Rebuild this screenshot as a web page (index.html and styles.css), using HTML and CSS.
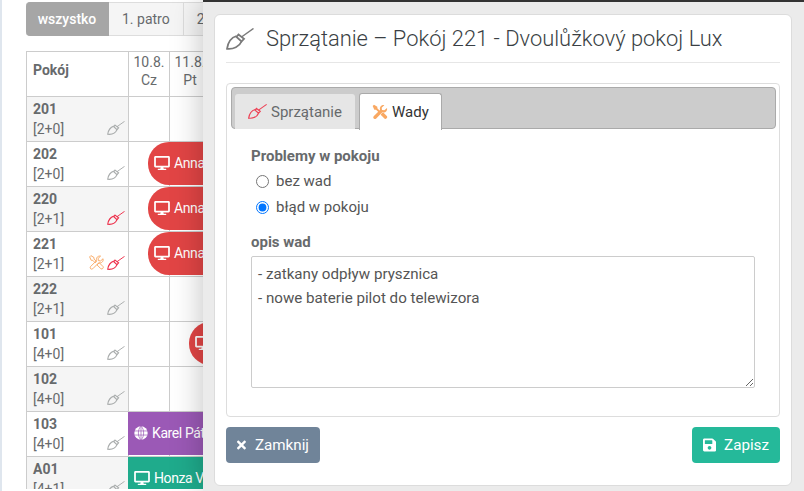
FILE: index.html
```html
<!DOCTYPE html>
<html lang="pl">
<head>
<meta charset="utf-8">
<title>Sprzątanie</title>
<link rel="stylesheet" href="styles.css">
</head>
<body>
<svg class="defs" width="0" height="0">
  <symbol id="broom" viewBox="0 0 28 22">
    <path d="M27.5 .5 15.5 9" fill="none" stroke="currentColor" stroke-width="1.5"/>
    <path d="M12.5 6.5 18 10.8 15.5 13.5 10.5 9Z" fill="none" stroke="currentColor" stroke-width="1.8"/>
    <path d="M10.5 8C5.5 9.5 2 14 1 20.8 7.5 21.5 13.5 18.5 15.5 13.5" fill="none" stroke="currentColor" stroke-width="1.8"/>
  </symbol>
  <symbol id="tools" viewBox="0 0 24 24">
    <path d="M22.5 6 18.5 9.5 15 9 14.5 5.5 18.5 1.8C14 1 11 4.5 12 9L2.5 18.5C.5 21 3.5 24 6 22L15.5 12.5C20 13.5 23.5 10.5 22.5 6Z" fill="none" stroke="currentColor" stroke-width="1.5"/>
    <path d="M1 3 3 1 8 4V6.5L12 10.5 10 12.5 6 8.5H3.5ZM14 14.5 16.5 12.5 22.5 18.5C24 20.5 21 23.5 19 22L13 16Z" fill="none" stroke="currentColor" stroke-width="1.5"/>
  </symbol>
  <symbol id="tools-solid" viewBox="0 0 24 24">
    <path d="M22.5 6 18.5 9.5 15 9 14.5 5.5 18.5 1.8C14 1 11 4.5 12 9L2.5 18.5C.5 21 3.5 24 6 22L15.5 12.5C20 13.5 23.5 10.5 22.5 6Z" fill="currentColor"/>
    <path d="M1 3 3 1 8 4V6.5L12 10.5 10 12.5 6 8.5H3.5ZM14 14.5 16.5 12.5 22.5 18.5C24 20.5 21 23.5 19 22L13 16Z" fill="currentColor"/>
  </symbol>
  <symbol id="desktop" viewBox="0 0 576 512">
    <path fill="currentColor" d="M528 0H48C21.5 0 0 21.5 0 48v320c0 26.5 21.5 48 48 48h192l-16 48h-72c-13.3 0-24 10.7-24 24s10.7 24 24 24h272c13.3 0 24-10.7 24-24s-10.7-24-24-24h-72l-16-48h192c26.5 0 48-21.5 48-48V48c0-26.5-21.5-48-48-48zm-16 352H64V64h448v288z"/>
  </symbol>
  <symbol id="globe" viewBox="0 0 24 24">
    <circle cx="12" cy="12" r="11.5" fill="currentColor"/>
    <path d="M1 8.5H23M1 15.5H23M12 0V24M12 .5C6 5 6 19 12 23.5M12 .5C18 5 18 19 12 23.5" fill="none" stroke="#9b59b6" stroke-width="1.2"/>
  </symbol>
  <symbol id="times" viewBox="0 0 352 512">
    <path fill="currentColor" d="M242.72 256l100.07-100.07c12.28-12.28 12.28-32.19 0-44.48l-22.24-22.24c-12.28-12.28-32.19-12.28-44.48 0L176 189.28 75.93 89.21c-12.28-12.28-32.19-12.28-44.48 0L9.21 111.45c-12.28 12.28-12.28 32.19 0 44.48L109.28 256 9.21 356.07c-12.28 12.28-12.28 32.19 0 44.48l22.24 22.24c12.28 12.28 32.2 12.28 44.48 0L176 322.72l100.07 100.07c12.28 12.28 32.2 12.28 44.48 0l22.24-22.24c12.28-12.28 12.28-32.19 0-44.48L242.72 256z"/>
  </symbol>
  <symbol id="save" viewBox="0 0 448 512">
    <path fill="currentColor" d="M433.941 129.941l-83.882-83.882A48 48 0 0 0 316.118 32H48C21.49 32 0 53.49 0 80v352c0 26.51 21.49 48 48 48h352c26.51 0 48-21.49 48-48V163.882a48 48 0 0 0-14.059-33.941zM224 416c-35.346 0-64-28.654-64-64 0-35.346 28.654-64 64-64s64 28.654 64 64c0 35.346-28.654 64-64 64zm96-304.52V212c0 6.627-5.373 12-12 12H76c-6.627 0-12-5.373-12-12V108c0-6.627 5.373-12 12-12h228.52c3.183 0 6.235 1.264 8.485 3.515l3.48 3.48A11.996 11.996 0 0 1 320 111.48z"/>
  </symbol>
</svg>

<main class="page">
  <nav class="floors">
    <a class="floor floor-active">wszystko</a>
    <a class="floor">1. patro</a>
    <a class="floor">2. patro</a>
  </nav>

  <div class="grid">
    <div class="cell head room">Pokój</div>
    <div class="cell head">10.8.<br>Cz</div>
    <div class="cell head">11.8.<br>Pt</div>

    <div class="cell room alt"><div class="room-info"><b>201</b><span>[2+0]</span></div><div class="room-icons"><svg class="i-broom"><use href="#broom"/></svg></div></div>
    <div class="cell"></div><div class="cell"></div>

    <div class="cell room"><div class="room-info"><b>202</b><span>[2+0]</span></div><div class="room-icons"><svg class="i-broom"><use href="#broom"/></svg></div></div>
    <div class="cell"><div class="bar bar-red bar-half"><svg class="i-desk"><use href="#desktop"/></svg>Anna</div></div><div class="cell"></div>

    <div class="cell room alt"><div class="room-info"><b>220</b><span>[2+1]</span></div><div class="room-icons"><svg class="i-broom dirty"><use href="#broom"/></svg></div></div>
    <div class="cell"><div class="bar bar-red bar-half"><svg class="i-desk"><use href="#desktop"/></svg>Anna</div></div><div class="cell"></div>

    <div class="cell room"><div class="room-info"><b>221</b><span>[2+1]</span></div><div class="room-icons"><svg class="i-tools"><use href="#tools"/></svg><svg class="i-broom dirty"><use href="#broom"/></svg></div></div>
    <div class="cell"><div class="bar bar-red bar-half"><svg class="i-desk"><use href="#desktop"/></svg>Anna</div></div><div class="cell"></div>

    <div class="cell room alt"><div class="room-info"><b>222</b><span>[2+1]</span></div><div class="room-icons"><svg class="i-broom"><use href="#broom"/></svg></div></div>
    <div class="cell"></div><div class="cell"></div>

    <div class="cell room"><div class="room-info"><b>101</b><span>[4+0]</span></div><div class="room-icons"><svg class="i-broom"><use href="#broom"/></svg></div></div>
    <div class="cell"></div><div class="cell"><div class="bar bar-red bar-half"><svg class="i-desk"><use href="#desktop"/></svg></div></div>

    <div class="cell room alt"><div class="room-info"><b>102</b><span>[4+0]</span></div><div class="room-icons"><svg class="i-broom"><use href="#broom"/></svg></div></div>
    <div class="cell"></div><div class="cell"></div>

    <div class="cell room"><div class="room-info"><b>103</b><span>[4+0]</span></div><div class="room-icons"><svg class="i-broom"><use href="#broom"/></svg></div></div>
    <div class="cell"><div class="bar bar-purple"><svg class="i-globe"><use href="#globe"/></svg>Karel Pátý</div></div><div class="cell"></div>

    <div class="cell room alt"><div class="room-info"><b>A01</b><span>[4+1]</span></div><div class="room-icons"><svg class="i-broom"><use href="#broom"/></svg></div></div>
    <div class="cell"><div class="bar bar-green"><svg class="i-desk"><use href="#desktop"/></svg>Honza Vyskočil</div></div><div class="cell"></div>
  </div>
</main>

<aside class="panel">
  <section class="modal">
    <header class="modal-head">
      <svg class="title-icon"><use href="#broom"/></svg>
      <h1>Sprzątanie – Pokój 221 - Dvoulůžkový pokoj Lux</h1>
    </header>

    <div class="tabs-box">
      <div class="tabs">
        <a class="tab"><svg class="tab-broom"><use href="#broom"/></svg>Sprzątanie</a>
        <a class="tab tab-active"><svg class="tab-tools"><use href="#tools-solid"/></svg>Wady</a>
      </div>
      <form class="form">
        <div class="label">Problemy w pokoju</div>
        <label class="radio"><input type="radio" name="w">bez wad</label>
        <label class="radio"><input type="radio" name="w" checked>błąd w pokoju</label>
        <div class="label label-opis">opis wad</div>
        <textarea class="area">- zatkany odpływ prysznica
- nowe baterie pilot do telewizora</textarea>
      </form>
    </div>

    <footer class="actions">
      <button type="button" class="btn btn-close"><svg class="i-times"><use href="#times"/></svg>Zamknij</button>
      <button type="button" class="btn btn-save"><svg class="i-save"><use href="#save"/></svg>Zapisz</button>
    </footer>
  </section>
</aside>
</body>
</html>
```
FILE: styles.css
```css
* { box-sizing: border-box; }
html, body { margin: 0; height: 100%; }
body {
  background: #fff;
  border-left: 2px solid #dfe6ee;
  font-family: Roboto, "Liberation Sans", sans-serif;
  font-size: 14px;
  color: #676a6c;
  overflow: hidden;
  width: 804px;
  height: 491px;
  position: relative;
}
.defs { position: absolute; }

.page { padding: 2px 0 0 24px; width: 300px; height: 489px; overflow: hidden; }
.floors { display: flex; height: 34px; width: 280px; }
.floor {
  display: block;
  padding: 0 13px;
  line-height: 32px;
  background: #f5f5f5;
  border: 1px solid #ddd;
  border-left: 0;
  white-space: nowrap;
  font-size: 14px;
  color: #676a6c;
}
.floor-active {
  background: #a6a6a6;
  border-color: #a6a6a6;
  color: #fff;
  font-weight: 500;
  border-radius: 4px 0 0 4px;
  width: 83px;
  text-align: center;
  padding: 0;
}

.grid {
  margin-top: 15px;
  display: grid;
  grid-template-columns: 102px 41px 41px;
  grid-auto-rows: 45px;
  width: 280px;
  border-top: 1px solid #ccc;
  border-left: 1px solid #ccc;
}
.cell {
  position: relative;
  border-right: 1px solid #ccc;
  border-bottom: 1px solid #ccc;
}
.head {
  text-align: center;
  line-height: 18px;
  padding-top: 1px;
  font-size: 14px;
}
.head.room {
  text-align: left;
  font-weight: 700;
  padding: 9px 0 0 6px;
  font-size: 14px;
}
.room { display: flex; justify-content: space-between; padding: 4px 3px 0 6px; }
.alt { background: #f5f5f5; }
.room-info { display: flex; flex-direction: column; }
.room-info b { font-weight: 700; line-height: 16px; }
.room-info span { line-height: 16px; margin-top: 4px; }
.room-icons { display: flex; align-items: flex-end; gap: 3px; padding-bottom: 6px; }
.i-broom { width: 18px; height: 14px; color: #a9acac; }
.i-broom.dirty { color: #ed2f4a; }
.i-tools { width: 15px; height: 15px; color: #f9a862; }

.bar {
  position: absolute;
  top: 0;
  left: -1px;
  width: 200px;
  height: 43px;
  display: flex;
  align-items: center;
  padding-bottom: 1px;
  color: #fff;
  font-size: 14px;
  letter-spacing: -.4px;
  white-space: nowrap;
  z-index: 1;
}
.bar-half { left: 19px; border-radius: 21px 0 0 21px; padding-left: 6px; }
.bar-red { background: #e24545; }
.bar-purple { background: #9b59b6; padding-left: 6px; }
.bar-green { background: #1fab8c; padding-left: 6px; }
.i-desk { width: 16px; height: 14px; margin-right: 4px; flex: none; }
.i-globe { width: 14px; height: 14px; margin-right: 4px; flex: none; }

.panel {
  position: absolute;
  z-index: 2;
  top: 0;
  left: 201px;
  right: 0;
  bottom: 0;
  background: #ebebeb;
  border-top: 2px solid #333;
  box-shadow: 0 0 30px rgba(0, 0, 0, .25);
  padding: 12px 12px 5px 11px;
}
.modal {
  height: 100%;
  background: #fff;
  border: 1px solid #dcdcdc;
  border-radius: 6px;
  padding: 0 11px;
  display: flex;
  flex-direction: column;
}
.modal-head {
  display: flex;
  align-items: center;
  height: 48px;
  border-bottom: 1px solid #e6e6e6;
  margin-bottom: 20px;
  flex: none;
}
.title-icon { width: 28px; height: 22px; color: #7a7a7a; flex: none; margin-right: 12px; }
h1 {
  margin: 0;
  font-size: 21.9px;
  font-weight: 300;
  color: #3a3f44;
  white-space: nowrap;
}

.tabs-box {
  height: 334px;
  border: 1px solid #ddd;
  border-radius: 4px;
  padding: 3px 3px 0 4px;
  flex: none;
}
.tabs {
  display: flex;
  align-items: flex-end;
  gap: 4px;
  height: 42px;
  background: #ccc;
  border: 1px solid #aaa;
  border-radius: 4px;
  padding: 0 0 0 3px;
}
.tab {
  display: flex;
  align-items: center;
  height: 35px;
  padding: 0 13px;
  background: #e6e6e6;
  border-radius: 3px 3px 0 0;
  color: #676a6c;
  font-size: 15px;
  margin-bottom: -1px;
}
.tab-active {
  background: #fff;
  border: 1px solid #aaa;
  border-bottom: 0;
  color: #333;
  height: 37px;
  margin-bottom: -2px;
  padding: 0 12px;
}
.tab-broom { width: 19px; height: 15px; margin-right: 4px; color: #ed4155; }
.tab-tools { width: 16px; height: 16px; margin-right: 4px; color: #f9a862; }

.form { padding: 19px 20px 0 20px; }
.label { font-weight: 700; line-height: 16px; font-size: 15px; }
.radio {
  display: flex;
  align-items: center;
  height: 26px;
  color: #555;
  padding-left: 5px;
  font-size: 15px;
}
.radio:first-of-type { margin-top: 4px; }
.radio input { margin: 0 7px 0 0; width: 13px; height: 13px; accent-color: #0075ff; }
.label-opis { margin-top: 14px; }
.area {
  display: block;
  margin-top: 6px;
  width: 504px;
  height: 132px;
  border: 1px solid #ccc;
  border-radius: 2px;
  padding: 5px 6px;
  font: 15.15px/24px Roboto, "Liberation Sans", sans-serif;
  color: #555;
  outline: none;
}

.actions { display: flex; justify-content: space-between; margin-top: 10px; }
.btn {
  display: flex;
  align-items: center;
  height: 36px;
  border: 0;
  border-radius: 4px;
  color: #fff;
  font: 400 15.2px Roboto, "Liberation Sans", sans-serif;
  padding: 0 11px;
}
.btn-close { background: #708499; width: 94px; }
.btn-save { background: #25b99a; width: 88px; }
.i-times { width: 11px; height: 14px; margin-right: 9px; }
.i-save { width: 14px; height: 16px; margin-right: 8px; }
```
